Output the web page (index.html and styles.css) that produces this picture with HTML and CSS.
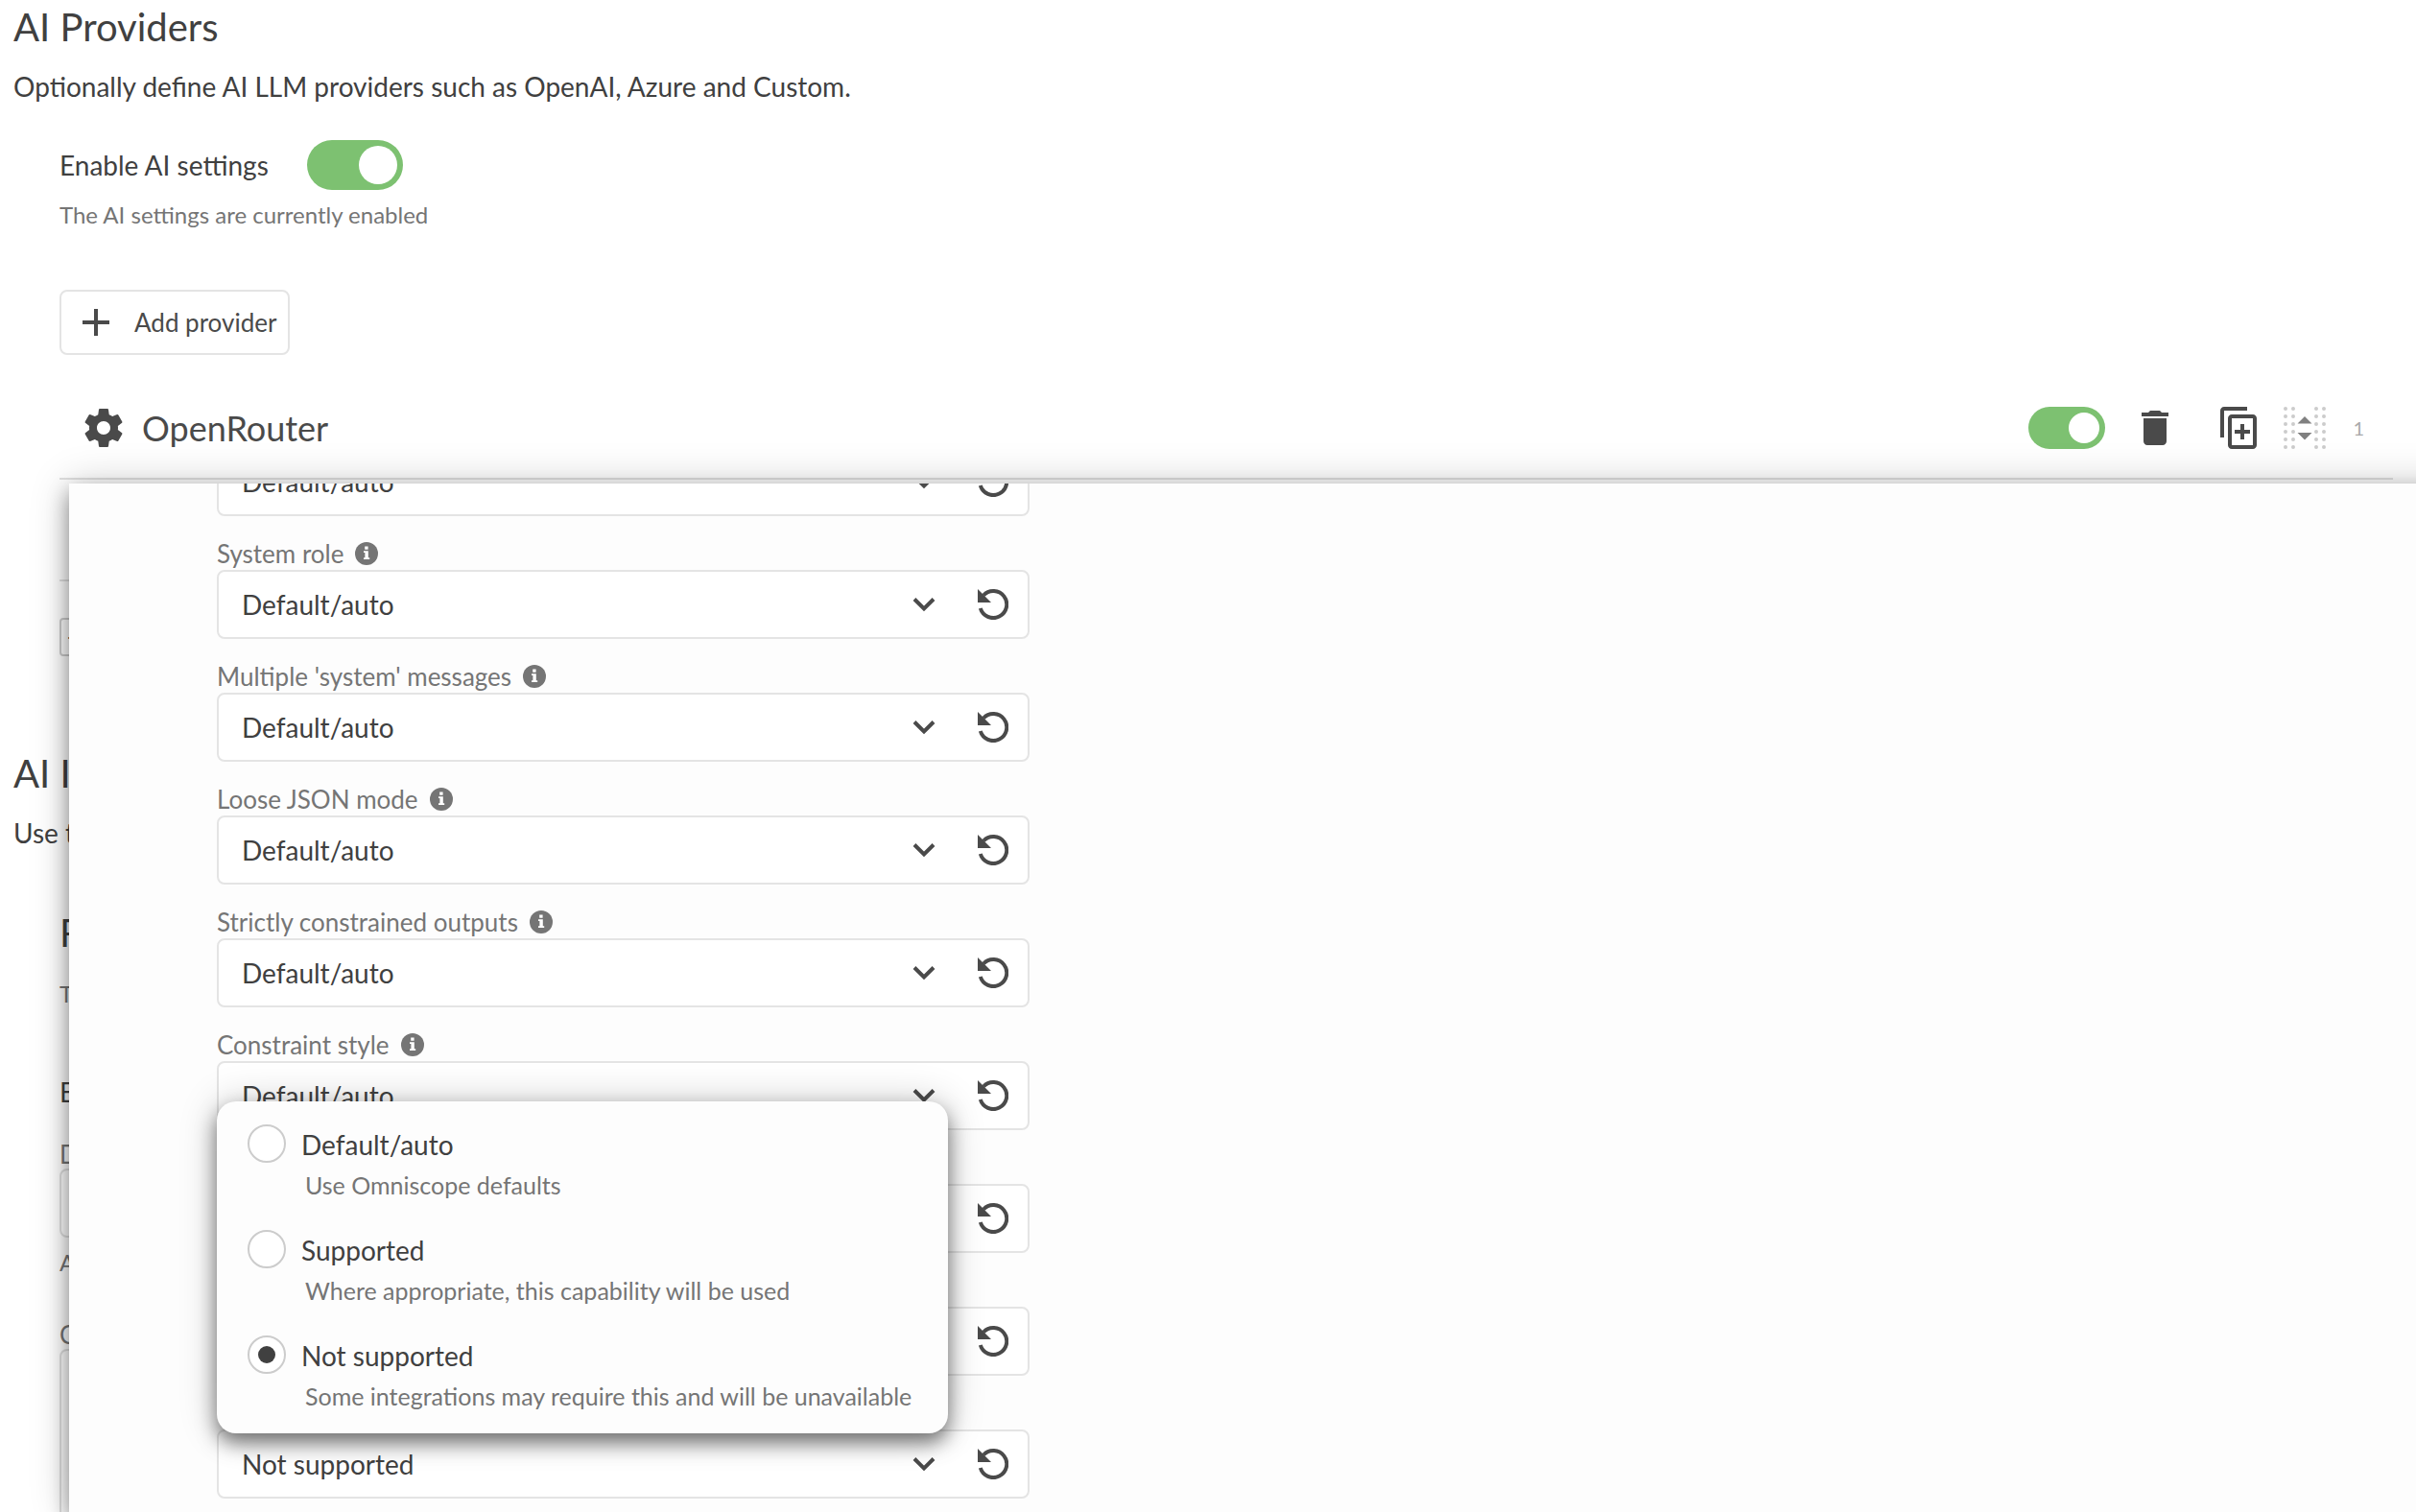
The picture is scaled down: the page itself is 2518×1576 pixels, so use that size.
FILE: index.html
```
<!DOCTYPE html>
<html lang="en">
<head>
  <meta charset="UTF-8">
  <meta name="viewport" content="width=device-width, initial-scale=1.0">
  <title>AI Providers</title>
  <link rel="stylesheet" href="styles.css">
</head>
<body>

  <!-- Icons used more than once -->
  <svg class="sprite" aria-hidden="true">
    <symbol id="icon-info" viewBox="0 0 24 24">
      <circle cx="12" cy="12" r="12" fill="currentColor"/>
      <path d="M10.2 4.500h3.400v3.200h-3.400zM9 9.200h4.800v7h1.400V18H9v-1.800h1.400v-5.200H9z" fill="#fff"/>
    </symbol>
    <symbol id="icon-chevron" viewBox="0 0 24 24">
      <path d="M2 6.500l10 10 10-10" fill="none" stroke="currentColor" stroke-width="4"/>
    </symbol>
    <symbol id="icon-reset" viewBox="0 0 32 32">
      <path d="M2.800 20A14 14 0 1 0 6 6.500" fill="none" stroke="currentColor" stroke-width="4"/>
      <path d="M0 0v14h14z" fill="currentColor"/>
    </symbol>
  </svg>

  <main class="settings">
    <section class="section">
      <h1>AI Providers</h1>
      <p class="intro">Optionally define AI LLM providers such as OpenAI, Azure and Custom.</p>

      <div class="section-body">
        <div class="enable-row">
          <label for="enableAi">Enable AI settings</label>
          <input type="checkbox" id="enableAi" class="toggle toggle-large" checked>
        </div>
        <p class="help">The AI settings are currently enabled</p>

        <button class="add-button">
          <svg viewBox="0 0 28 28" width="28" height="28"><path d="M12 0h4v12h12v4H16v12h-4V16H0v-4h12z" fill="currentColor"/></svg>
          Add provider
        </button>

        <div class="provider">
          <svg class="gear" viewBox="0 0 24 24"><path d="M19.43 12.98c.04-.32.07-.64.07-.98s-.03-.66-.07-.98l2.11-1.65c.19-.15.24-.42.12-.64l-2-3.46c-.12-.22-.39-.3-.61-.22l-2.49 1c-.52-.4-1.08-.73-1.69-.98l-.38-2.65C14.46 2.18 14.25 2 14 2h-4c-.25 0-.46.18-.49.42l-.38 2.65c-.61.25-1.17.59-1.69.98l-2.49-1c-.23-.09-.49 0-.61.22l-2 3.46c-.13.22-.07.49.12.64l2.11 1.65c-.04.32-.07.65-.07.98s.03.66.07.98l-2.11 1.65c-.19.15-.24.42-.12.64l2 3.46c.12.22.39.3.61.22l2.49-1c.52.4 1.08.73 1.69.98l.38 2.65c.03.24.24.42.49.42h4c.25 0 .46-.18.49-.42l.38-2.65c.61-.25 1.17-.59 1.69-.98l2.49 1c.23.09.49 0 .61-.22l2-3.46c.12-.22.07-.49-.12-.64l-2.11-1.65zM12 15.5c-1.93 0-3.5-1.57-3.5-3.5s1.57-3.5 3.5-3.5 3.5 1.57 3.5 3.5-1.57 3.5-3.5 3.5z" fill="currentColor"/></svg>
          <h2>OpenRouter</h2>
          <div class="provider-actions">
            <input type="checkbox" class="toggle" aria-label="Enable OpenRouter" checked>
            <button class="icon-button" aria-label="Delete">
              <svg viewBox="0 0 24 24" width="48" height="48"><path d="M6 19c0 1.100.9 2 2 2h8c1.100 0 2-.9 2-2V7H6v12zM19 4h-3.500l-1-1h-5l-1 1H5v2h14V4z" fill="currentColor"/></svg>
            </button>
            <button class="icon-button duplicate" aria-label="Duplicate">
              <svg viewBox="0 0 24 24" width="48" height="48"><path d="M16 1H4c-1.100 0-2 .9-2 2v14h2V3h12V1zM19 5H8c-1.100 0-2 .9-2 2v14c0 1.100.9 2 2 2h11c1.100 0 2-.9 2-2V7c0-1.100-.9-2-2-2zm0 16H8V7h11v14zM12.500 10h2v3h3v2h-3v3h-2v-3h-3v-2h3z" fill="currentColor"/></svg>
            </button>
            <svg class="drag-handle" viewBox="0 0 44 44">
              <g stroke="#ccc" stroke-width="4" stroke-linecap="round" stroke-dasharray="0 8">
                <path d="M2 2v41M10 2v41M34 2v41M42 2v41"/>
              </g>
              <path d="M14.500 17.500L22 10l7.500 7.500zM14.500 27L22 34.500l7.500-7.500z" fill="#808080"/>
            </svg>
            <span class="order">1</span>
          </div>
        </div>

        <div class="provider-list-end">
          <button class="small-button">+</button>
        </div>
      </div>
    </section>

    <section class="section">
      <h1>AI Integrations</h1>
      <p class="intro">Use the providers above in the integrations below.</p>

      <div class="section-body integrations">
        <h3>Reports</h3>
        <p class="help">The assistant used in reports</p>
        <p class="option-title">Enabled</p>
        <label class="field-label" for="defaultModel">Default model</label>
        <input type="text" id="defaultModel" class="text-box">
        <p class="help">A model used by default</p>
        <label class="field-label custom-label" for="customText">Custom instructions</label>
        <textarea id="customText" class="text-box text-area"></textarea>
      </div>
    </section>
  </main>

  <!-- Provider capabilities dialog -->
  <div class="panel">
    <div class="panel-scroll">
      <div class="field">
        <div class="select-box">
          <select aria-label="Capability"><option>Default/auto</option><option>Supported</option><option>Not supported</option></select>
          <svg class="chevron"><use href="#icon-chevron"/></svg>
          <button class="reset" aria-label="Reset"><svg><use href="#icon-reset"/></svg></button>
        </div>
      </div>
      <div class="field">
        <label for="systemRole">System role <svg class="info"><use href="#icon-info"/></svg></label>
        <div class="select-box">
          <select id="systemRole"><option>Default/auto</option><option>Supported</option><option>Not supported</option></select>
          <svg class="chevron"><use href="#icon-chevron"/></svg>
          <button class="reset" aria-label="Reset"><svg><use href="#icon-reset"/></svg></button>
        </div>
      </div>
      <div class="field">
        <label for="multipleSystem">Multiple 'system' messages <svg class="info"><use href="#icon-info"/></svg></label>
        <div class="select-box">
          <select id="multipleSystem"><option>Default/auto</option><option>Supported</option><option>Not supported</option></select>
          <svg class="chevron"><use href="#icon-chevron"/></svg>
          <button class="reset" aria-label="Reset"><svg><use href="#icon-reset"/></svg></button>
        </div>
      </div>
      <div class="field">
        <label for="looseJson">Loose JSON mode <svg class="info"><use href="#icon-info"/></svg></label>
        <div class="select-box">
          <select id="looseJson"><option>Default/auto</option><option>Supported</option><option>Not supported</option></select>
          <svg class="chevron"><use href="#icon-chevron"/></svg>
          <button class="reset" aria-label="Reset"><svg><use href="#icon-reset"/></svg></button>
        </div>
      </div>
      <div class="field">
        <label for="strictOutputs">Strictly constrained outputs <svg class="info"><use href="#icon-info"/></svg></label>
        <div class="select-box">
          <select id="strictOutputs"><option>Default/auto</option><option>Supported</option><option>Not supported</option></select>
          <svg class="chevron"><use href="#icon-chevron"/></svg>
          <button class="reset" aria-label="Reset"><svg><use href="#icon-reset"/></svg></button>
        </div>
      </div>
      <div class="field">
        <label for="constraintStyle">Constraint style <svg class="info"><use href="#icon-info"/></svg></label>
        <div class="select-box">
          <select id="constraintStyle"><option>Default/auto</option><option>Supported</option><option>Not supported</option></select>
          <svg class="chevron"><use href="#icon-chevron"/></svg>
          <button class="reset" aria-label="Reset"><svg><use href="#icon-reset"/></svg></button>
        </div>
      </div>
      <div class="field">
        <div class="select-box">
          <select aria-label="Tools"><option></option><option>Default/auto</option><option>Supported</option><option>Not supported</option></select>
          <svg class="chevron"><use href="#icon-chevron"/></svg>
          <button class="reset" aria-label="Reset"><svg><use href="#icon-reset"/></svg></button>
        </div>
      </div>
      <div class="field">
        <div class="select-box">
          <select aria-label="Streaming"><option></option><option>Default/auto</option><option>Supported</option><option>Not supported</option></select>
          <svg class="chevron"><use href="#icon-chevron"/></svg>
          <button class="reset" aria-label="Reset"><svg><use href="#icon-reset"/></svg></button>
        </div>
      </div>
      <div class="field">
        <div class="select-box">
          <select aria-label="Images"><option>Default/auto</option><option>Supported</option><option selected>Not supported</option></select>
          <svg class="chevron"><use href="#icon-chevron"/></svg>
          <button class="reset" aria-label="Reset"><svg><use href="#icon-reset"/></svg></button>
        </div>

        <div class="menu">
          <div class="choice">
            <input type="radio" name="support" id="supportAuto">
            <label for="supportAuto">Default/auto <small>Use Omniscope defaults</small></label>
          </div>
          <div class="choice">
            <input type="radio" name="support" id="supportYes">
            <label for="supportYes">Supported <small>Where appropriate, this capability will be used</small></label>
          </div>
          <div class="choice">
            <input type="radio" name="support" id="supportNo" checked>
            <label for="supportNo">Not supported <small>Some integrations may require this and will be unavailable</small></label>
          </div>
        </div>
      </div>
    </div>
  </div>

</body>
</html>
```
FILE: styles.css
```
* {
  box-sizing: border-box;
}
body {
  margin: 0;
  height: 100vh;
  position: relative;
  overflow: hidden;
  background-color: #fff;
  color: #404040;
  font-family: Lato, "Open Sans", sans-serif;
  font-size: 28px;
  line-height: 36px;
}
h1, h2, h3, p {
  margin: 0;
  font-weight: 400;
}
h1, h3 {
  font-size: 40px;
  line-height: 48px;
}
h2 {
  font-size: 36px;
  line-height: 48px;
}
input, select, button, textarea {
  margin: 0;
  font: inherit;
  color: inherit;
}
button {
  padding: 0;
  border: none;
  background: none;
  cursor: pointer;
}
svg {
  display: block;
  flex: none;
}
.sprite {
  display: none;
}

/* Page */
.settings {
  padding: 4px 24px 0 14px;
}
.section {
  height: 778px;
}
.intro {
  margin-top: 20px;
}
.section-body {
  padding: 38px 0 0 48px;
}
.enable-row {
  display: flex;
  align-items: center;
  gap: 40px;
  height: 52px;
}
.help {
  margin-top: 8px;
  font-size: 24px;
  color: #757575;
}
.toggle {
  appearance: none;
  display: flex;
  justify-content: flex-end;
  align-items: center;
  width: 80px;
  height: 44px;
  padding: 6px;
  border-radius: 26px;
  background-color: #7dc171; /* Green when on */
}
.toggle::before {
  content: "";
  width: 32px;
  height: 32px;
  border-radius: 50%;
  background-color: #fff;
}
.toggle-large {
  width: 100px;
  height: 52px;
}
.toggle-large::before {
  width: 40px;
  height: 40px;
}
.add-button {
  display: flex;
  align-items: center;
  gap: 26px;
  height: 68px;
  margin-top: 60px;
  padding: 0 12px 0 22px;
  border: 2px solid #e4e4e4;
  border-radius: 8px;
  font-size: 26px;
  color: #4a4a4a;
}
.provider {
  display: flex;
  align-items: center;
  height: 130px;
  padding: 24px 30px 0 22px;
  border-bottom: 2px solid #e0e0e0;
  color: #4a4a4a;
}
.provider h2 {
  flex: 1;
  margin-left: 16px;
}
.gear {
  width: 48px;
  height: 48px;
}
.provider-actions {
  display: flex;
  align-items: center;
}
.icon-button {
  margin-left: 28px;
}
.duplicate {
  margin-left: 40px;
}
.drag-handle {
  width: 44px;
  height: 44px;
  margin-left: 22px;
}
.order {
  margin-left: 28px;
  font-size: 20px;
  color: #aaa;
}
.provider-list-end {
  margin-top: 104px;
  padding-top: 38px;
  border-top: 2px solid #e0e0e0;
}
.small-button {
  width: 40px;
  height: 40px;
  padding-left: 6px;
  border: 2px solid #ccc;
  border-radius: 4px;
  line-height: 32px;
  text-align: left;
}
.integrations {
  padding-top: 62px;
}
h3 + .help {
  margin-top: 22px;
}
.option-title {
  margin-top: 66px;
}
.field-label {
  display: block;
  margin-top: 32px;
  font-size: 26px;
  line-height: 30px;
  color: #757575;
}
.custom-label {
  margin-top: 42px;
}
.text-box {
  display: block;
  width: 848px;
  height: 72px;
  border: 2px solid #e0e0e0;
  border-radius: 8px;
  background-color: #fff;
}
.text-area {
  height: 240px;
  resize: none;
}

/* Dialog */
.panel {
  position: absolute;
  top: 504px;
  left: 72px;
  right: -60px;
  bottom: 0;
  background-color: #fdfdfd;
  box-shadow: 0 10px 20px rgba(0, 0, 0, 0.4), 0 0 40px rgba(0, 0, 0, 0.2);
}
.panel-scroll {
  display: flex;
  flex-direction: column;
  justify-content: flex-end;
  gap: 24px;
  height: 100%;
  padding: 0 0 14px 154px;
  overflow: hidden;
}
.field {
  position: relative;
  display: flex;
  flex: none;
  flex-direction: column;
  justify-content: flex-end;
  width: 847px;
  height: 104px;
}
.field > label {
  display: flex;
  align-items: center;
  gap: 12px;
  margin-bottom: 2px;
  font-size: 26px;
  line-height: 30px;
  color: #757575;
}
.info {
  width: 24px;
  height: 24px;
}
.select-box {
  display: flex;
  flex: none;
  align-items: center;
  height: 72px;
  padding-right: 20px;
  border: 2px solid #e4e4e4;
  border-radius: 8px;
  background-color: #fff;
  color: #4a4a4a;
}
.select-box select {
  appearance: none;
  flex: 1;
  height: 100%;
  padding: 0 0 0 24px;
  border: none;
  background: none;
  color: #404040;
}
.chevron {
  width: 24px;
  height: 24px;
}
.reset {
  margin-left: 44px;
}
.reset svg {
  width: 32px;
  height: 32px;
}

/* Drop-down menu */
.menu {
  position: absolute;
  left: 0;
  bottom: 68px;
  display: flex;
  flex-direction: column;
  gap: 29px;
  padding: 24px 38px 21px 32px;
  border-radius: 20px;
  background-color: #fdfdfd;
  box-shadow: 0 10px 20px rgba(0, 0, 0, 0.5), 0 0 40px rgba(0, 0, 0, 0.2);
}
.choice {
  display: flex;
  gap: 16px;
}
.choice input {
  appearance: none;
  display: flex;
  flex: none;
  width: 40px;
  height: 40px;
  border: 2px solid #ccc;
  border-radius: 50%;
  background-color: #fff;
}
.choice input:checked::before {
  content: "";
  width: 18px;
  height: 18px;
  margin: auto;
  border-radius: 50%;
  background-color: #404040;
}
.choice label {
  padding-top: 3px;
}
.choice small {
  display: block;
  margin-top: 6px;
  padding-left: 4px;
  font-size: 25px;
  color: #757575;
  white-space: nowrap;
}
```
